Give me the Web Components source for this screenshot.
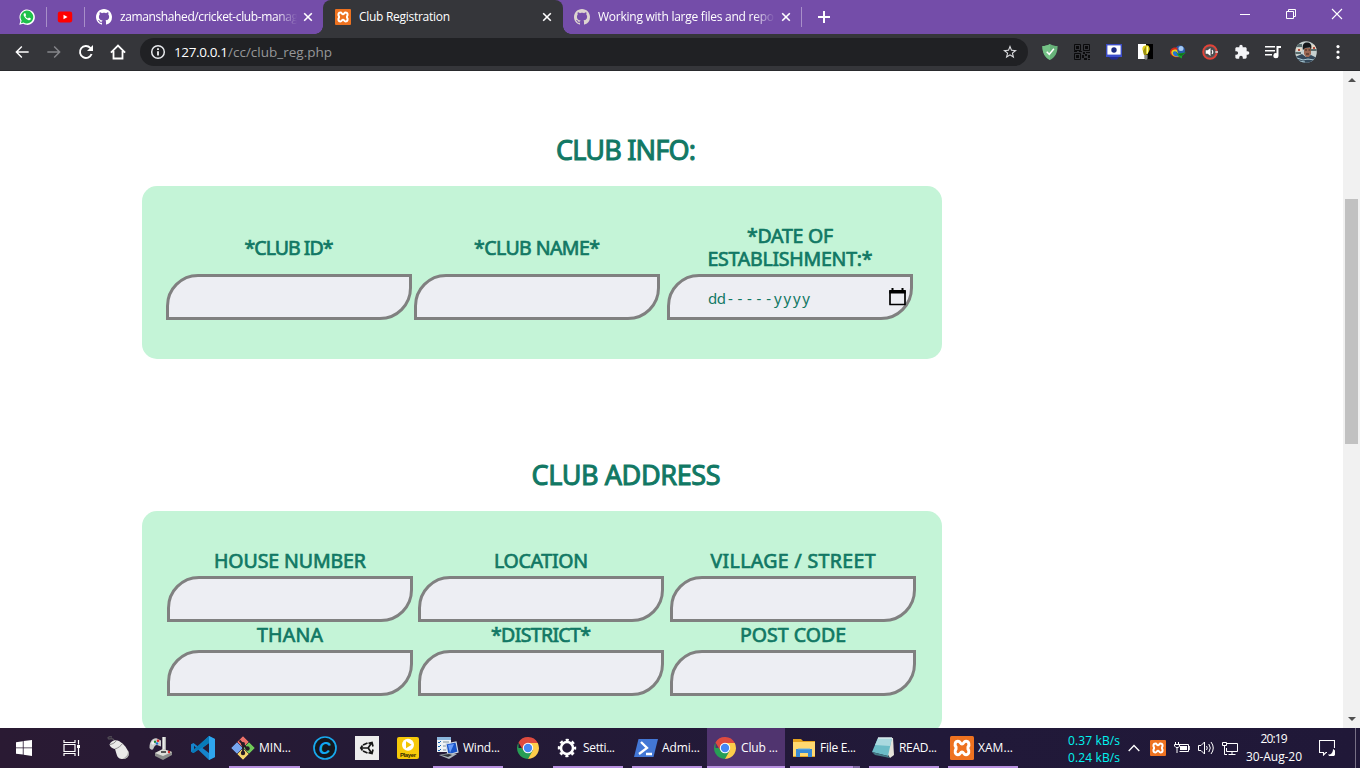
<!DOCTYPE html>
<html lang="en">
<head>
<meta charset="utf-8">
<title>Club Registration</title>
<style>
html,body{margin:0;height:100%;overflow:hidden;background:#fff;font-family:"Open Sans","Noto Sans",sans-serif}
body{display:flex;flex-direction:column;width:1360px;height:768px}
</style>
</head>
<body>
<browser-tabs></browser-tabs>
<browser-toolbar></browser-toolbar>
<page-view>
  <form-section heading="CLUB INFO:" hw="140" class="info">
    <form-field w="89" label="*CLUB ID*"></form-field>
    <form-field w="126" label="*CLUB NAME*"></form-field>
    <form-field w="165" label="*DATE OF&#10;ESTABLISHMENT:*" date></form-field>
  </form-section>
  <form-section heading="CLUB ADDRESS" hw="189" class="address">
    <form-field w="152" label="HOUSE NUMBER"></form-field>
    <form-field w="94" label="LOCATION"></form-field>
    <form-field w="165" label="VILLAGE / STREET"></form-field>
    <form-field w="66" label="THANA"></form-field>
    <form-field w="100" label="*DISTRICT*"></form-field>
    <form-field w="106" label="POST CODE"></form-field>
  </form-section>
</page-view>
<task-bar></task-bar>
<script>
const xamppMark = '<path d="M8 5.300C5 5.300 4.300 8.800 6 11v2C4.300 15.200 5 18.700 8 18.700 10.600 18.700 10 16 12 16s1.400 2.700 4 2.700c3 0 3.700-3.500 2-5.700v-2c1.700-2.200 1-5.700-2-5.700-2.600 0-2 2.700-4 2.700S10.600 5.300 8 5.300z" fill="none" stroke="#fff" stroke-width="3"/>';
const githubPath = 'M8 0C3.58 0 0 3.58 0 8c0 3.54 2.29 6.53 5.47 7.59.4.07.55-.17.55-.38 0-.19-.01-.82-.01-1.49-2.01.37-2.53-.49-2.69-.94-.09-.23-.48-.94-.82-1.13-.28-.15-.68-.52-.01-.53.63-.01 1.08.58 1.23.82.72 1.21 1.87.87 2.33.66.07-.52.28-.87.51-1.07-1.78-.2-3.64-.89-3.64-3.95 0-.87.31-1.59.82-2.15-.08-.2-.36-1.02.08-2.12 0 0 .67-.21 2.2.82.64-.18 1.32-.27 2-.27s1.36.09 2 .27c1.53-1.04 2.2-.82 2.2-.82.44 1.1.16 1.92.08 2.12.51.56.82 1.27.82 2.15 0 3.07-1.87 3.75-3.65 3.95.29.25.54.73.54 1.48 0 1.07-.01 1.93-.01 2.2 0 .21.15.46.55.38A8.01 8.01 0 0 0 16 8c0-4.42-3.58-8-8-8z';
/* name: [viewBox, markup] */
const ICONS = {
 whatsapp:['0 0 16 16','<path d="M.3 15.8 1.4 11.9A7.7 7.7 0 1 1 4.2 14.8Z" fill="#fff"/><path d="M1.9 14.2l.7-2.6A6.4 6.4 0 1 1 4.6 13.5Z" fill="#1fc04b"/><path d="M5.4 4.2c-.9.5-1 1.9-.3 3.1 1 1.9 2.600 3.300 4.500 3.900 1.100.300 2.200-.3 2.300-1.600L10 8.600 9 9.600C7.800 9.100 7.000 8.300 6.400 7.200L7.100 6.300 6.400 4.300Z" fill="#fff"/>'],
 youtube:['0 0 16 16','<rect x=".8" y="2.500" width="14.400" height="11" rx="2.300" fill="#f00"/><path d="M6.500 5.700v4.600l4-2.300z" fill="#fff"/>'],
 github:['0 0 16 16','<path fill="#fff" d="'+githubPath+'"/>'],
 github2:['0 0 16 16','<path fill="#ddd5d0" d="'+githubPath+'"/>'],
 xampp:['0 0 24 24','<rect width="24" height="24" rx="1.500" fill="#ee7220"/>'+xamppMark],
 close:['0 0 16 16','<path d="M4.200 4.200l7.600 7.600M11.800 4.200l-7.600 7.600" stroke="#fff" stroke-width="1.600"/>'],
 plus:['0 0 16 16','<path d="M8 2v12M2 8h12" stroke="#fff" stroke-width="2"/>'],
 min:['0 0 12 12','<path d="M1 6.500h10" stroke="#fff"/>'],
 restore:['0 0 12 12','<path d="M1.500 3.500h7v7h-7zM3.500 3.500v-2h7v7h-2" fill="none" stroke="#fff"/>'],
 wclose:['0 0 12 12','<path d="M1 1l10 10M11 1 1 11" stroke="#fff" stroke-width="1.100"/>'],
 back:['0 0 24 24','<path fill="#fff" d="M22 10.900H6.200l6.300-6.300L11 3 2 12l9 9 1.500-1.600-6.300-6.300H22z"/>'],
 fwd:['0 0 24 24','<path fill="#85868a" d="M2 10.900h15.800l-6.300-6.300L13 3l9 9-9 9-1.500-1.600 6.300-6.300H2z"/>'],
 reload:['0 0 16 16','<path d="M13.600 10A6 6 0 1 1 12.300 3.800L14 5.500" fill="none" stroke="#fff" stroke-width="1.900"/><path d="M15 1v6H9z" fill="#fff"/>'],
 home:['0 0 16 16','<path d="M.900 8.600 8 1.500l7.100 7.100M3.500 7v7.500h9V7" fill="none" stroke="#fff" stroke-width="1.800"/>'],
 info:['0 0 16 16','<circle cx="8" cy="8" r="6.300" fill="none" stroke="#e8eaed" stroke-width="1.500"/><path d="M8 7.200v4.300M8 4.300v1.700" stroke="#fff" stroke-width="1.700"/>'],
 star:['0 0 24 24','<path fill="#dcdde0" d="M22.500 9.240l-7.690-.62L12 1.500 9.190 8.630 1.500 9.240l5.960 4.730L5.620 21.500 12 17.270 18.380 21.500l-1.830-7.530L22.500 9.240zM12 15.400l-3.760 2.270 1-4.280-3.320-2.880 4.380-.38L12 6.100l1.710 4.040 4.380.38-3.320 2.880 1 4.280L12 15.400z"/>'],
 shield:['0 0 16 16','<path d="M8 0c2.500 1.500 5 2 7.600 2C15.600 9 13 13.600 8 16 3 13.600.400 9 .400 2 3 2 5.500 1.500 8 0z" fill="#67b279"/><path d="M8 0C5.500 1.500 3 2 .400 2 .400 9 3 13.600 8 16z" fill="#74c286"/><path d="M4.700 7.700 7.300 10.300 11.900 4.700" fill="none" stroke="#fff" stroke-width="1.500"/>'],
 qr:['0 0 16 16','<path fill="none" stroke="#0b0b0c" d="M.5.5h6v6h-6zM9.500.5h6v6h-6zM.5 9.500h6v6h-6z"/><path fill="#0b0b0c" d="M2 2h3v3H2zM11 2h3v3h-3zM2 11h3v3H2zM9 8h2v2H9zM12 8h4v1h-4zM8 11h2v3H8zM11 10h2v2h-2zM14 11h2v3h-2zM10 14h3v2h-3zM14 15h2v1h-2zM0 7h3v1H0zM5 7h3v1H5z"/>'],
 camera:['0 0 16 16','<rect x=".7" y=".7" width="14.600" height="10.600" fill="#fff" stroke="#3b4cc4" stroke-width="1.400"/><circle cx="8" cy="6" r="2.700" fill="#1c2a80"/><path d="M0 11h16v2H0z" fill="#3c4fcd"/><path d="M3 13h10l-2 2.500H5z" fill="#252c92"/>'],
 bulb:['0 0 16 16','<path fill="#fff" d="M0 0h8v15H0z"/><path fill="#000" d="M8 0h7v15H8z"/><path d="M8 1.500C4.500 1 3.700 4.500 5 7l1 3.500h3.500C10.500 7.500 12.500 6 11.400 3.500 11 1.500 9.500 1 8 1.500z" fill="#e0cf1a"/><path d="M8 2v9H6L5 7z" fill="#9c9010"/><path d="M6.300 11h3.300v3.500L8 16l-1.700-1.500z" fill="#8a8b8c"/><path d="M9.400 2.500v7" stroke="#ffffa5" stroke-width="1.300"/>'],
 idm:['0 0 16 16','<circle cx="10" cy="6.500" r="5" fill="#295cad"/><circle cx="11" cy="4.500" r="2.500" fill="#a4c9f2"/><path d="M0 8C0 4.500 4 2.500 7.500 4l-.5 4 3 5C5 14 0 12 0 8z" fill="#d42a1c"/><path d="M1.300 8.500C1.500 6 4.500 4.800 7 6l2 6.500c-4 1-7.500-.8-7.700-4z" fill="#e9d21a"/><path d="M2.800 9C3 7 5 6.500 7 8l2 4.500c-3 .5-6-.8-6.200-3.500z" fill="#2671d5"/><path d="M5.500 7.500 8 9.500l8-1-4 3.500v2.500L9 13z" fill="#18a12a"/><path d="M8 10l7-1-4 3z" fill="#0c6f1b"/>'],
 sound:['0 0 16 16','<circle cx="8" cy="8" r="6.800" fill="#5a5b5e" stroke="#e34338" stroke-width="1.900"/><circle cx="8" cy="8" r="5" fill="#4c4c4e"/><path d="M3.700 6.300h2L8.500 4v8L5.700 9.700h-2z" fill="#fff"/><path d="M10 6q1.600 2 0 4" fill="none" stroke="#fff" stroke-width="1.100"/><path d="M13.300 8H16" stroke="#ddd" stroke-width="1.500"/>'],
 ext:['0 0 24 24','<path fill="#f4f5f7" d="M20.500 11H19V7c0-1.100-.9-2-2-2h-4V3.500a2.500 2.500 0 0 0-5 0V5H4c-1.100 0-2 .9-2 2v3.800h1.500a2.700 2.700 0 0 1 0 5.400H2V20c0 1.100.9 2 2 2h3.800v-1.500a2.700 2.700 0 0 1 5.400 0V22H17c1.100 0 2-.9 2-2v-4h1.500a2.500 2.500 0 0 0 0-5z"/>'],
 music:['0 0 18 16','<path fill="#fff" d="M1 2h10v1.600H1zM1 6h10v1.600H1zM1 10h7v1.600H1zM12.500 2H17v2h-2.500v7.500a2.600 2.600 0 1 1-2-2.300z"/>'],
 avatar:['0 0 22 22','<defs><clipPath id="p"><circle cx="11" cy="11" r="10.800"/></clipPath></defs><g clip-path="url(#p)"><path fill="#c6d0cf" d="M0 0h22v22H0z"/><path fill="#596c6d" d="M0 3h7v3H0zM15 8h7v2h-7zM0 11h6v2H0z"/><path fill="#e5d8c6" d="M1 7h6v3H1zM16 4h6v4h-6z"/><path fill="#b44c3b" d="M3 8h2v2H3zM18 6h2v2h-2z"/><path d="M0 22v-6l7-3 4 3 5-2 6 3v5z" fill="#33485a"/><path d="M2 17l6 2 5-1 6 1M4 20l6 1" fill="none" stroke="#a6c5d0" stroke-width="1.200"/><path d="M9 7h7v6l-2 3h-3l-2-3z" fill="#9b6852"/><path d="M8 9C7 3 9 1 13 1.500c3.500.5 4 4 3 7L15 6.500 10 7z" fill="#15181b"/><path d="M10 9h2M13.500 9h2M11 13h3" stroke="#3b2621"/></g>'],
 dots:['0 0 16 16','<g fill="#fff"><circle cx="8" cy="2.600" r="1.600"/><circle cx="8" cy="8" r="1.600"/><circle cx="8" cy="13.400" r="1.600"/></g>'],
 cal:['0 0 17 18','<path d="M3.500 0v3M13.500 0v3" stroke="#000" stroke-width="2"/><path d="M1 3h15v13.500H1z" fill="none" stroke="#000" stroke-width="1.700" stroke-linejoin="round"/><path d="M.3 2h16.400v3.500H.3z"/>'],
 up:['0 0 8 4','<path d="M0 4l4-4 4 4z" fill="#505050"/>'],
 down:['0 0 8 4','<path d="M0 0h8L4 4z" fill="#505050"/>'],
 win:['0 0 16 16','<path fill="#fff" d="M0 2.200 6.800 1.200v6.300H0zM7.600 1.100 16 0v7.500H7.600zM0 8.300h6.800v6.300L0 13.700zM7.600 8.300H16v7.600l-8.400-1.100z"/>'],
 view:['0 0 18 16','<path fill="none" stroke="#fff" stroke-width="1.200" d="M1 0v2.500h11V0M1 16v-2.500h11V16M1 4.500h11v7H1zM15.500 0v4.500M15.500 8v8"/><path fill="#fff" d="M14 5h3v3h-3z"/>'],
 mouse:['0 0 24 24','<path d="M8 5C6 1 2 4 1 2.500S3 .5 5 1" fill="none" stroke="#666"/><path d="M2.500 8.500C4 5 8 3 12 5c5 3 7 6 9 10 2 5-1 8-5 8-3.500 0-5.500-1-6.500-5L8 13C5.500 12.500 3 11 2.500 8.500z" fill="#e9e9e8"/><path d="M3 8.500c3-.5 5-2 6.500-4M8 13c3-1 6-3 7.500-5.500" fill="none" stroke="#777" stroke-width=".8"/><path d="M21 14.500c3 4.500-1 8.500-6 8.500 4.500-2 6-4 6-8.500z" fill="#aaa"/>'],
 pad:['0 0 24 24','<path d="M.5 12C.5 5 4 1.500 8 2.500l4 2v6L8 9c-2 0-3 2-4 4.500C2 14 1 13 .5 12z" fill="#c9cbc9"/><path d="M2 7l3-3 3 1-4 4z" fill="#f2f2f0"/><circle cx="8" cy="7.500" r="1.200" fill="#1a6fd3"/><circle cx="6" cy="5.800" r="1.200" fill="#198a3b"/><circle cx="9" cy="4.800" r="1.300" fill="#e52222"/><path d="M13 1h4v15h-4z" fill="#a8aaa8"/><path d="M14 1h1.700v13H14z" fill="#eee"/><path d="M6 17l8-4 9 3v3l-9 5-8-4z" fill="#8b8d8b"/><path d="M6 17l8-4 9 3-9 4z" fill="#deded9"/><path d="M12 15h5v2h-5z" fill="#555"/><circle cx="20" cy="16" r="1.200" fill="#d22"/>'],
 vscode:['0 0 24 24','<path fill="#1684cc" d="M18 0 7 10.500 2.500 7 0 8.300v7.400L2.500 17 7 13.500 18 24l6-3V3zM3 9.700 5.300 12 3 14.300zM18 7v10l-6.500-5z" fill-rule="evenodd"/><path d="M18 0l6 3v18l-6 3z" fill="#2fa5ee"/><path d="M0 15.700 18 0v7L2.500 17z" fill="#087ab9"/>'],
 git:['0 0 24 24','<g stroke="#261a30" stroke-width=".5" stroke-linejoin="round"><path d="M12 0l6 6-6 6-6-6z" fill="#eb7069"/><path d="M24 12l-6 6-6-6 6-6z" fill="#70c958"/><path d="M12 24l-6-6 6-6 6 6z" fill="#f3d36b"/><path d="M0 12l6-6 6 6-6 6z" fill="#76a5ee"/></g><path d="M8.500 4.500l3.500 3.500v9M12 8.500l4 4" stroke="#261a26" stroke-width="1.800" fill="none"/><g fill="#261a26"><circle cx="12" cy="8" r="2"/><circle cx="12" cy="17" r="2.200"/><circle cx="16.500" cy="12.500" r="2.200"/></g>'],
 cc:['0 0 24 24','<circle cx="12" cy="12" r="11" fill="#14171d" stroke="#18a9ed" stroke-width="1.700"/><text x="11.600" y="17.800" text-anchor="middle" font-family="Liberation Sans" font-style="italic" font-weight="700" font-size="16.500" fill="#11a9f1">C</text>'],
 unity:['0 0 24 24','<path fill="#ededed" d="M0 0h24v24H0z"/><path d="M13.500 7.300 17 6.500l1 4M13.500 16.700l3.500.8 1-4M7.500 9.500 5.800 12l1.700 2.500M8 9l4.500-2M8 15l4.500 2M6.500 12h6.700l3.300-5M13.200 12l3.300 5" fill="none" stroke="#151515" stroke-width="1.700"/>'],
 player:['0 0 24 24','<rect x="1" y="1" width="22" height="22" rx="2" fill="#f6c909"/><circle cx="12" cy="8.800" r="6" fill="#fff"/><path d="M10 5.300v7l5.600-3.500z" fill="#f2c400"/><text x="12" y="21" text-anchor="middle" font-family="Liberation Sans" font-weight="700" font-size="6" textLength="16" fill="#332800">Player</text>'],
 wind:['0 0 24 24','<path fill="#eef2f5" d="M2 1h14v15H2z"/><path d="M2 1h14v3H2z" fill="#8bb6dc"/><path d="M3 6l1 1 2-2M3 10l1 1 2-2M3 14l1 1 2-2" stroke="#1464b5" fill="none"/><path d="M8 6h6M8 10h4M8 14h3" stroke="#7e9099"/><path d="M11 8l10-2 2 10-10 3z" fill="#1954c9" stroke="#cfd9e7" stroke-width="1.200"/><path d="M13 9l6-1-4 9z" fill="#6a9dfa"/><path d="M4 19l10-2 8 1-8 5z" fill="#abb2b9"/><path d="M6 19l8-1 3 1-4 2z" fill="#30363d"/>'],
 chrome:['0 0 24 24','<path d="M12 12H2.500V6.500A11 11 0 0 0 12 23l5-8z" fill="#279e55"/><path d="M12 7h9.800A11 11 0 0 1 12 23l5-9z" fill="#fdcd4a"/><path d="M2.500 6.500A11 11 0 0 1 21.800 7H12l-5 7z" fill="#de4b3f"/><circle cx="12" cy="12" r="5.200" fill="#fff"/><circle cx="12" cy="12" r="4.200" fill="#4687f4"/>'],
 gear:['0 0 24 24','<circle cx="12" cy="12" r="6" fill="none" stroke="#fff" stroke-width="2.500"/><circle cx="12" cy="12" r="8" fill="none" stroke="#fff" stroke-width="2.400" stroke-dasharray="3.140 3.140" stroke-dashoffset="1.570"/>'],
 ps:['0 0 24 24','<path d="M4.500 3H24l-4.500 18H0z" fill="#4377d5"/><path d="M7 6l6 6-8 6M12 18h6" fill="none" stroke="#fff" stroke-width="2.300"/>'],
 folder:['0 0 24 24','<path d="M1 3h8l2 2h12v16H1z" fill="#e5a31f"/><path d="M1 6h22v14H1z" fill="#ffd970"/><path d="M4 21v-8h16v8h-4v-4H8v4z" fill="#398bd4"/><path d="M6 13h12" stroke="#63b2ed"/>'],
 note:['0 0 24 24','<path d="M7 2h15l1 17-4 3z" fill="#e5e4da"/><path d="M7 2h14l-4 18L1 16z" fill="#6cbcc7"/><path d="M7 2h14l-2 8L4 9z" fill="#aad9df"/><path d="M1 16l16 4 2 2-15-3z" fill="#437984"/><path d="M7 2h14" stroke="#d8eaec" stroke-width="1.500"/>'],
 chev:['0 0 12 8','<path d="M.7 7 6 1.500 11.300 7" fill="none" stroke="#fff" stroke-width="1.300"/>'],
 bat:['0 0 16 16','<path d="M4.500 4.500h10v7h-9M14.500 6.500h1.200v3h-1.200" fill="none" stroke="#fff"/><path d="M6 6h7v4H6z" fill="#fff"/><path d="M1.500 2v2M4.500 2v2M.5 4.500h5v2l-1.500 1H2L.5 6zM3 7v6" fill="none" stroke="#fff"/>'],
 vol:['0 0 16 16','<path d="M.5 5.500H3L6.500 2v12L3 10.500H.5zM8.500 6q1.500 2 0 4M10.800 4q3 4 0 8M13 2q4.500 6 0 12" fill="none" stroke="#fff"/>'],
 net:['0 0 16 16','<path d="M5 3.500h10.500v8H4.500V8M10 11.500v3M6.500 14.500h7M.5 2.500h4v3h-4zM2.500 5.500v9H5" fill="none" stroke="#fff"/>'],
 noti:['0 0 16 16','<path d="M15.500 8V.5H.5v12h4V15l2.500-2.500h1" fill="none" stroke="#fff" stroke-width="1.100"/><path d="M14 9a4 4 0 1 1-5 5.500c3 .5 5-2 5-5.500z" fill="#fff"/>']
};
const define=(n,c)=>customElements.define(n,c);
class Base extends HTMLElement{
 paint(html){const t=document.createElement('template');t.innerHTML=html;this.attachShadow({mode:'open'}).append(t.content.cloneNode(true));}
}
define('ui-icon',class extends Base{connectedCallback(){
 if(this.shadowRoot)return;
 const i=ICONS[this.getAttribute('name')],w=this.getAttribute('w')||16,h=this.getAttribute('h')||w;
 this.paint(`<style>:host{display:block;flex:none;width:${w}px;height:${h}px}svg{display:block}</style><svg width="${w}" height="${h}" viewBox="${i[0]}">${i[1]}</svg>`);
}});
/* text tracked so that its longest line fills a fixed measure */
define('fit-text',class extends Base{connectedCallback(){
 if(this.shadowRoot)return;
 this.paint(`<style>:host{display:block;flex:none;white-space:pre;text-align:center}span{display:inline-block}</style><span><slot></slot></span>`);
 const s=this.shadowRoot.querySelector('span'),w=+this.getAttribute('w'),n=Math.max(...this.textContent.split('\n').map(l=>l.length));
 const d=(w-s.getBoundingClientRect().width)/(n-1);
 s.style.letterSpacing=d+'px';s.style.marginRight=-d+'px';this.style.width=w+'px';
}});
define('browser-tab',class extends Base{connectedCallback(){
 if(this.shadowRoot)return;
 const a=this.hasAttribute('active');
 this.paint(`<style>
 :host{display:flex;align-items:center;box-sizing:border-box;flex:none;height:34px;padding:0 ${a?8:6}px 0 12px;position:relative;color:#fff;font-size:12px;${a?'background:#35363a;border-radius:8px 8px 0 0;':''}}
 .t{width:179px;margin-left:8px;overflow:hidden;line-height:34px;${a?'':'mask-image:linear-gradient(90deg,#000 87%,transparent 99%)'}}
 ui-icon.x{margin-left:auto}
 ${a?`.l,.r{position:absolute;bottom:0;width:8px;height:8px}.l{left:-8px;background:radial-gradient(circle at 0 0,transparent 7.500px,#35363a 8px)}.r{right:-8px;background:radial-gradient(circle at 100% 0,transparent 7.500px,#35363a 8px)}`:''}
 </style><ui-icon name="${this.getAttribute('icon')}"></ui-icon><div class="t"><fit-text w="${this.getAttribute('tw')}">${this.getAttribute('label')}</fit-text></div><ui-icon class="x" name="close"></ui-icon><i class="l"></i><i class="r"></i>`);
}});
define('browser-tabs',class extends Base{connectedCallback(){
 this.paint(`<style>:host{display:flex;flex:none;align-items:center;height:34px;background:#744da9}
 .s{width:1px;height:20px;background:#a88fc9;flex:none}.pin{display:flex;justify-content:center}
 .w{margin-left:auto;display:flex;gap:34px;padding:0 17px 6px 0}</style>
 <div class="pin" style="width:46px;box-sizing:border-box;padding-left:8px"><ui-icon name="whatsapp"></ui-icon></div><i class="s"></i>
 <div class="pin" style="width:37px;box-sizing:border-box;padding-right:1px"><ui-icon name="youtube"></ui-icon></div><i class="s"></i>
 <browser-tab style="width:238px;margin-left:-1px" icon="github" tw="178" label="zamanshahed/cricket-club-manag"></browser-tab>
 <browser-tab active style="width:240px;margin-left:1px" icon="xampp" tw="91" label="Club Registration"></browser-tab>
 <browser-tab style="width:238px;margin-left:-1px" icon="github2" tw="176" label="Working with large files and repo"></browser-tab>
 <i class="s" style="margin-left:1px"></i><ui-icon name="plus" style="margin-left:14px"></ui-icon>
 <div class="w"><ui-icon name="min" w="12"></ui-icon><ui-icon name="restore" w="12"></ui-icon><ui-icon name="wclose" w="12"></ui-icon></div>`);
}});
define('browser-toolbar',class extends Base{connectedCallback(){
 this.paint(`<style>:host{display:flex;flex:none;align-items:center;box-sizing:border-box;height:37px;background:#35363a;border-bottom:1px solid #292a2d;padding-left:14px}
 .nav{display:flex;gap:16px}
 .bar{display:flex;align-items:center;width:888px;height:28px;box-sizing:border-box;border-radius:14px;background:#202124;margin-left:14px;padding:0 10px;font-size:13.500px;color:#969799}
 .bar fit-text{padding-bottom:1px}
 .bar ui-icon:last-child{margin-left:auto}.host{color:#fff;margin-left:8px}
 .e{display:flex;align-items:center;margin-left:14px;gap:16px}</style>
 <div class="nav"><ui-icon name="back"></ui-icon><ui-icon name="fwd"></ui-icon><ui-icon name="reload"></ui-icon><ui-icon name="home"></ui-icon></div>
 <div class="bar"><ui-icon name="info"></ui-icon><fit-text class="host" w="54">127.0.0.1</fit-text><fit-text w="104">/cc/club_reg.php</fit-text><ui-icon name="star"></ui-icon></div>
 <div class="e"><ui-icon name="shield"></ui-icon><ui-icon name="qr"></ui-icon><ui-icon name="camera"></ui-icon><ui-icon name="bulb"></ui-icon><ui-icon name="idm"></ui-icon><ui-icon name="sound"></ui-icon><ui-icon name="ext"></ui-icon><ui-icon name="music" w="18" h="16" style="margin:0 -3px 0 -2px"></ui-icon><ui-icon name="avatar" w="22" style="margin-right:-3px"></ui-icon><ui-icon name="dots"></ui-icon></div>`);
}});
define('scroll-bar',class extends Base{connectedCallback(){
 this.paint(`<style>:host{display:flex;flex-direction:column;align-items:center;width:17px;flex:none;box-sizing:border-box;background:#f1f1f1;padding:7px 0}.th{width:13px;height:245px;background:#c1c1c1;margin-top:117px}.d{margin-top:auto}</style><ui-icon name="up" w="8" h="4"></ui-icon><div class="th"></div><ui-icon class="d" name="down" w="8" h="4"></ui-icon>`);
}});
define('page-view',class extends Base{connectedCallback(){
 this.paint(`<style>:host{display:flex;height:657px;flex:none;overflow:hidden;background:#fff}main{flex:1;min-width:0;overflow:hidden;padding-top:56px}
 ::slotted(.info){--cols:248px 253px 246px;--left:24px;--ih:173px}::slotted(.address){margin-top:93px;--cols:251px 252px 246px;--left:25px;--ih:222px}</style><main><slot></slot></main><scroll-bar></scroll-bar>`);
}});
define('form-section',class extends Base{connectedCallback(){
 this.paint(`<style>:host{display:block;width:800px;margin-left:142px;color:#117864}
 h2{margin:0 0 0 168px;height:59px;font:400 27px/45px "Noto Sans",sans-serif;-webkit-text-stroke:1px #117864;display:flex;justify-content:center}
 .card{height:var(--ih);box-sizing:border-box;background:#c4f4d7;border-radius:15px;display:grid;grid-template-columns:var(--cols);grid-auto-rows:max-content;padding:37px 0 0 var(--left)}</style>
 <h2><fit-text w="${this.getAttribute('hw')}">${this.getAttribute('heading')}</fit-text></h2><div class="card"><slot></slot></div>`);
}});
define('form-field',class extends Base{connectedCallback(){
 const info=this.parentElement.className==='info';
 this.paint(`<style>:host{display:block;width:246px}
 .l{height:${info?51:28}px;padding-bottom:3px;box-sizing:border-box;display:flex;flex-direction:column;align-items:center;justify-content:center;font:400 19.500px/23px "Noto Sans",sans-serif;-webkit-text-stroke:.7px #117864}
 .b{height:46px;box-sizing:border-box;border:3px solid #808080;border-radius:32px 0;background:#edeef3;display:flex;align-items:center;padding:0 4px 0 38px;font:15px/20px "Noto Sans",sans-serif}
 .b fit-text{padding-top:2px}.b ui-icon{margin-left:auto}</style>
 <div class="l"><fit-text w="${this.getAttribute('w')}">${this.getAttribute('label')}</fit-text></div>
 <div class="b">${this.hasAttribute('date')?'<fit-text w="18">dd</fit-text><fit-text w="43" style="margin-left:2px">-----</fit-text><fit-text w="36" style="margin-left:3px">yyyy</fit-text><ui-icon name="cal" w="17" h="18"></ui-icon>':''}</div>`);
}});
define('task-item',class extends Base{connectedCallback(){
 const g=n=>this.getAttribute(n),lab=g('label'),w=+g('w'),a=this.hasAttribute('active');
 this.paint(`<style>:host{display:flex;flex:none;box-sizing:border-box;height:40px;width:${w}px;margin-left:${g('gap')||0}px;align-items:center;color:#fff;font-size:12px;
 ${lab?`padding-left:${a?6:2}px;border-bottom:2px solid #b790df;padding-top:2px;`:`justify-content:center;`}${a?'background:#50346f;':''}
 ${this.hasAttribute('stack')?'border-image:linear-gradient(90deg,#b790df 61px,#22193a 61px,#826aa5 62px) 2;':''}}
 fit-text{margin-left:4px;padding-bottom:1px}</style><ui-icon name="${g('icon')}" w="${g('iw')||24}" h="${g('h')||g('iw')||24}"></ui-icon>${lab?`<fit-text w="${g('tw')}">${lab}</fit-text>`:''}`);
}});
define('task-bar',class extends Base{connectedCallback(){
 this.paint(`<style>:host{display:flex;flex:none;height:40px;background:linear-gradient(90deg,#2a1a33,#241a36 30%,#211939 70%,#201838);color:#fff;font-size:12px}
 .tray{display:flex;align-items:center;width:342px;box-sizing:border-box;padding-left:50px}
 .net{color:#00f5f0;line-height:17px;font-size:12px;width:52px;padding-top:1px}
 .clock{width:60px;margin-left:6px;display:flex;flex-direction:column;align-items:center;line-height:18px;padding-bottom:1px}
 .end{width:1px;align-self:stretch;background:#777085;margin-left:20px}</style>
 <task-item icon="win" iw="16" w="48"></task-item><task-item icon="view" iw="18" h="16" w="48"></task-item>
 <task-item icon="mouse" w="46"></task-item><task-item icon="pad" w="38"></task-item><task-item icon="vscode" w="46"></task-item>
 <task-item icon="git" label="MIN..." tw="32" w="71" gap="3"></task-item>
 <task-item icon="cc" w="42" gap="4"></task-item><task-item icon="unity" w="42"></task-item><task-item icon="player" w="40"></task-item>
 <task-item icon="wind" label="Wind..." tw="37" w="70" gap="5"></task-item><task-item icon="chrome" w="42" gap="4"></task-item>
 <task-item icon="gear" label="Setti..." tw="32" w="70" gap="4"></task-item><task-item icon="ps" label="Admi..." tw="38" w="70" gap="9"></task-item>
 <task-item active icon="chrome" label="Club ..." tw="37" w="78" gap="5"></task-item><task-item stack icon="folder" label="File E..." tw="36" w="70" gap="5"></task-item>
 <task-item icon="note" label="READ..." tw="38" w="70" gap="9"></task-item><task-item icon="xampp" label="XAM..." tw="35" w="70" gap="9"></task-item>
 <div class="tray"><div class="net"><fit-text w="52">0.37 kB/s</fit-text><fit-text w="52">0.24 kB/s</fit-text></div>
 <ui-icon name="chev" w="12" h="8" style="margin-left:8px"></ui-icon><ui-icon name="xampp" style="margin-left:10px"></ui-icon><ui-icon name="bat" style="margin-left:8px"></ui-icon><ui-icon name="vol" style="margin-left:8px"></ui-icon><ui-icon name="net" style="margin-left:8px"></ui-icon>
 <div class="clock"><fit-text w="27">20:19</fit-text><fit-text w="56">30-Aug-20</fit-text></div><ui-icon name="noti" style="margin-left:15px"></ui-icon><i class="end"></i></div>`);
}});
</script>
</body>
</html>
